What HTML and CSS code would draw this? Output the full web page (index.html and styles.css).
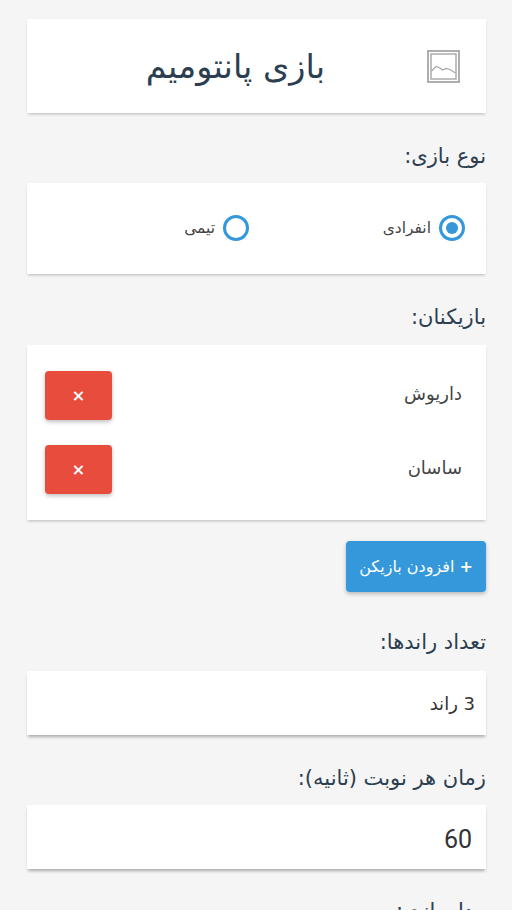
FILE: index.html
```html
<!DOCTYPE html>
<html lang="fa" dir="rtl">
<head>
    <meta charset="UTF-8">
    <meta name="viewport" content="width=device-width, initial-scale=1.0">
    <title>بازی پانتومیم</title>
    <link rel="stylesheet" href="styles.css">
</head>
<body>
    <div class="page">
        <header class="card title-card">
            <svg class="logo" width="33" height="33" viewBox="0 0 33 33" fill="none" stroke="#a6a6a6">
                <rect x="1" y="1" width="31" height="31" stroke-width="1.8"/>
                <rect x="4" y="4" width="25" height="25" stroke-width="1.4"/>
                <path d="M4.5 21 L9 16.5 L13 18 L15.5 20 L19 18.5 L23 19.5 L26 21.5 L28.5 23" stroke-width="1.2"/>
            </svg>
            <h1 class="title">بازی پانتومیم</h1>
        </header>

        <label class="field-label type-label">نوع بازی:</label>
        <div class="card radio-card">
            <div class="radio-option option-single">
                <span class="radio checked"></span>
                <span class="radio-text">انفرادی</span>
            </div>
            <div class="radio-option">
                <span class="radio"></span>
                <span class="radio-text">تیمی</span>
            </div>
        </div>

        <label class="field-label players-label">بازیکنان:</label>
        <div class="card players-card">
            <div class="player-row">
                <span class="player-name">داریوش</span>
                <button class="remove-button">×</button>
            </div>
            <div class="player-row">
                <span class="player-name">ساسان</span>
                <button class="remove-button">×</button>
            </div>
        </div>

        <div class="add-row">
            <button class="add-button"><span class="plus">+</span> افزودن بازیکن</button>
        </div>

        <label class="field-label rounds-label">تعداد راندها:</label>
        <div class="card value-card rounds-value">3 راند</div>

        <label class="field-label time-label">زمان هر نوبت (ثانیه):</label>
        <div class="card value-card time-value">60</div>

        <label class="field-label last-label">مدل بازی:</label>
    </div>
</body>
</html>
```

FILE: styles.css
```css
html, body {
    margin: 0;
    padding: 0;
    height: 910px;
    overflow: hidden;
    background: #f5f5f5;
}
body {
    font-family: "DejaVu Sans", "Noto Sans", sans-serif;
    color: #2c3e50;
}
.page {
    padding: 19px 26px 0 27px;
}
.card {
    background: #fff;
    box-shadow: 0 2px 3px -1px rgba(0, 0, 0, 0.25);
}
.title-card {
    height: 94px;
    display: flex;
    align-items: center;
    padding: 0 26px 0 0;
}
.logo {
    flex: none;
}
.title {
    margin: 0 102px 0 0;
    font-size: 33.5px;
    font-weight: normal;
    color: #2c3e50;
}
.field-label {
    display: block;
    font-size: 21px;
    line-height: 30px;
}
.type-label {
    margin-top: 28px;
    margin-bottom: 12px;
}
.radio-card {
    height: 91px;
    box-sizing: border-box;
    display: flex;
    align-items: center;
    padding: 0 21px 2px;
}
.radio-option {
    display: flex;
    align-items: center;
    gap: 8px;
}
.option-single {
    width: 216px;
}
.radio {
    width: 20px;
    height: 20px;
    border: 3px solid #3498db;
    border-radius: 50%;
    display: flex;
    align-items: center;
    justify-content: center;
}
.radio.checked::after {
    content: "";
    width: 12px;
    height: 12px;
    border-radius: 50%;
    background: #3498db;
}
.radio-text {
    font-size: 15.5px;
    color: #444;
}
.players-label {
    margin-top: 28px;
    margin-bottom: 13px;
}
.players-card {
    height: 175px;
    box-sizing: border-box;
    padding: 26px 24px 0 18px;
    display: flex;
    flex-direction: column;
    gap: 25px;
}
.player-row {
    display: flex;
    align-items: center;
    justify-content: space-between;
}
.player-name {
    font-size: 18px;
    color: #444;
    padding-bottom: 4px;
}
.remove-button {
    width: 67px;
    height: 49px;
    border: 0;
    border-radius: 4px;
    background: #e74c3c;
    color: #fff;
    font-family: inherit;
    font-size: 16px;
    font-weight: bold;
    box-shadow: 0 2px 4px rgba(0, 0, 0, 0.25);
}
.add-row {
    display: flex;
    margin-top: 21px;
}
.add-button {
    width: 140px;
    height: 51px;
    border: 0;
    border-radius: 4px;
    background: #3498db;
    color: #fff;
    font-family: inherit;
    font-size: 16px;
    padding: 0;
    white-space: nowrap;
    box-shadow: 0 2px 4px rgba(0, 0, 0, 0.25);
}
.plus {
    font-weight: bold;
}
.rounds-label {
    margin-top: 35px;
    margin-bottom: 14px;
}
.value-card {
    height: 64px;
    box-sizing: border-box;
    display: flex;
    align-items: center;
    padding-right: 11px;
    color: #333;
    box-shadow: 0 3px 3px -1px rgba(0, 0, 0, 0.3);
}
.rounds-value {
    font-size: 18px;
}
.time-value {
    font-size: 25px;
    font-family: Roboto, sans-serif;
    padding-right: 14px;
    padding-top: 4px;
}
.time-label {
    margin-top: 28px;
    margin-bottom: 12px;
}
.last-label {
    margin-top: 27px;
}
```
